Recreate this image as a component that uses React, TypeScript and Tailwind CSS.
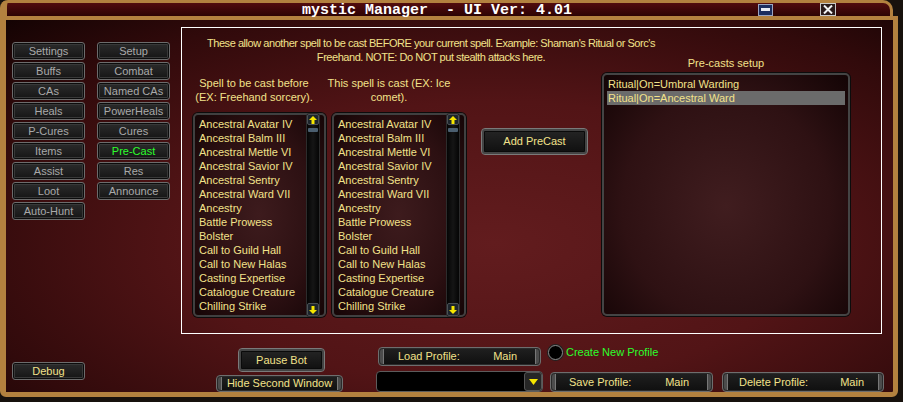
import React from "react";

const spells = [
  "Ancestral Avatar IV",
  "Ancestral Balm III",
  "Ancestral Mettle VI",
  "Ancestral Savior IV",
  "Ancestral Sentry",
  "Ancestral Ward VII",
  "Ancestry",
  "Battle Prowess",
  "Bolster",
  "Call to Guild Hall",
  "Call to New Halas",
  "Casting Expertise",
  "Catalogue Creature",
  "Chilling Strike",
];

const nav: [string, string | null][] = [
  ["Settings", "Setup"],
  ["Buffs", "Combat"],
  ["CAs", "Named CAs"],
  ["Heals", "PowerHeals"],
  ["P-Cures", "Cures"],
  ["Items", "Pre-Cast"],
  ["Assist", "Res"],
  ["Loot", "Announce"],
  ["Auto-Hunt", null],
];

function NavBtn({ label, className = "", color = "text-[#a9a9a9]" }: { label: string; className?: string; color?: string }) {
  return (
    <div
      className={`flex items-center justify-center rounded-[3px] border border-[#6c6c6c] bg-[linear-gradient(#2c2c2c,#151515)] shadow-[inset_0_0_0_1px_#0c0c0c,inset_0_0_0_2px_#383838] leading-none ${color} ${className}`}
    >
      {label}
    </div>
  );
}

function BigBtn({ label, className = "" }: { label: string; className?: string }) {
  return (
    <div
      className={`flex items-center justify-center rounded-[4px] border border-[#7a7a7a] bg-[linear-gradient(#262626,#0e0e0e)] shadow-[inset_0_0_0_2px_#444,inset_0_0_0_3px_#0a0a0a] text-[#f2e28a] leading-none ${className}`}
    >
      {label}
    </div>
  );
}

function BracketBtn({ className = "", children }: { className?: string; children: React.ReactNode }) {
  return (
    <div className={`flex rounded-[4px] border border-[#6e6e6e] bg-[#2a2a2a] p-[1px] ${className}`}>
      <div className="flex flex-1 rounded-[3px] border-x-[3px] border-[#4c4c4c] bg-[linear-gradient(#1f1f1f,#101010)] shadow-[inset_1px_0_0_#777,inset_-1px_0_0_#777] text-[#f2e28a] leading-none">
        {children}
      </div>
    </div>
  );
}

function UpArrow() {
  return (
    <svg width="8" height="8" viewBox="0 0 8 8">
      <polygon points="4,0 8,4 5.5,4 5.5,8 2.5,8 2.5,4 0,4" fill="#f6e600" />
    </svg>
  );
}
function DownArrow() {
  return (
    <svg width="8" height="8" viewBox="0 0 8 8">
      <polygon points="4,8 8,4 5.5,4 5.5,0 2.5,0 2.5,4 0,4" fill="#f6e600" />
    </svg>
  );
}

function Scrollbar() {
  return (
    <div className="-my-[2px] mr-[4px] flex w-[14px] flex-col rounded-[3px] border border-[#2c2c2c] bg-[linear-gradient(90deg,#050505,#151515,#050505)]">
      <div className="flex h-[11px] items-center justify-center rounded-[2px] border border-[#4a4f55] bg-[#1d252c]">
        <UpArrow />
      </div>
      <div className="mx-[1px] mt-[3px] h-[4px] rounded-[1px] bg-[#4b5f70]" />
      <div className="flex-1" />
      <div className="flex h-[13px] items-center justify-center rounded-[2px] border border-[#4a4f55] bg-[#1d252c]">
        <DownArrow />
      </div>
    </div>
  );
}

function SpellList({ w }: { w: string }) {
  return (
    <div
      className={`flex h-[204px] ${w} rounded-[5px] border-2 border-[#404040] bg-[radial-gradient(ellipse_at_50%_50%,#3d1b1d_0%,#2c1012_60%,#150506_100%)] shadow-[0_0_0_1px_#0c0c0c]`}
    >
      <div className="flex-1 overflow-hidden whitespace-nowrap pl-[4px] pt-[2px] leading-[14px] text-[#f2e28a]">
        {spells.map((s) => (
          <div key={s}>{s}</div>
        ))}
      </div>
      <Scrollbar />
    </div>
  );
}

export default function App() {
  return (
    <div className="h-[402px] w-[903px] overflow-hidden bg-[#17110d] font-['Liberation_Sans',Arial,sans-serif] text-[11px]">
      {/* Title bar */}
      <div className="flex h-[16px] w-[893px] items-center rounded-tl-[8px] rounded-tr-[10px] border-l-[7px] border-r-[3px] border-t-[3px] border-[#b3813f] bg-[linear-gradient(#520c0e,#2c0304)]">
        <div className="ml-[295px] mt-[1px] whitespace-pre font-['Liberation_Mono',monospace] text-[15px] font-bold leading-none text-white">
          {"mystic Manager  - UI Ver: 4.01"}
        </div>
        <div className="ml-[186px] flex h-[12px] w-[15px] items-start justify-center border border-[#9aa4c0] bg-[#1b2d5e] pt-[3px]">
          <div className="h-[3px] w-[9px] bg-[#e8ecf4]" />
        </div>
        <div className="ml-[47px] flex h-[13px] w-[16px] items-center justify-center self-start border border-[#c8c8c8] bg-[#2a1a1a]">
          <svg width="10" height="9" viewBox="0 0 10 9">
            <path d="M1 0.5 L9 8.5 M9 0.5 L1 8.5" stroke="#f2f2f2" strokeWidth="2" />
          </svg>
        </div>
      </div>

      {/* Body */}
      <div className="flex h-[381px] w-[898px] flex-col rounded-b-[6px] border-b-[5px] border-l-[6px] border-r-[5px] border-t-[4px] border-[#b3813f] bg-[radial-gradient(ellipse_at_55%_60%,#621c1e_0%,#521416_45%,#310a0b_78%,#140303_100%)] pt-[7px]">
        <div className="flex h-[307px]">
          {/* Left nav */}
          <div className="w-[175px] pl-[6px] pt-[15px]">
            <div className="grid grid-cols-[73px_73px] gap-x-[12px] gap-y-[2px]">
              {nav.map(([a, b]) => (
                <React.Fragment key={a}>
                  <NavBtn label={a} className="h-[18px]" />
                  {b ? (
                    <NavBtn label={b} className="h-[18px]" color={b === "Pre-Cast" ? "text-[#2cff2c]" : "text-[#a9a9a9]"} />
                  ) : (
                    <div />
                  )}
                </React.Fragment>
              ))}
            </div>
          </div>

          {/* Main panel */}
          <div className="flex h-[307px] w-[701px] flex-col border border-white">
            <div className="h-[29px] w-[498px] whitespace-nowrap pt-[8px] text-center leading-[14px] tracking-[-0.45px] text-[#f2e28a]">
              These allow another spell to be cast BEFORE your current spell. Example: Shaman's Ritual or Sorc's
              <br />
              Freehand. NOTE: Do NOT put stealth attacks here.
            </div>
            <div className="flex">
              <div className="w-[420px]">
                <div className="flex gap-[11px] pl-[10px] pt-[19px] text-center leading-[14px] text-[#f2e28a]">
                  <div className="w-[124px] whitespace-nowrap">
                    Spell to be cast before
                    <br />
                    (EX: Freehand sorcery).
                  </div>
                  <div className="w-[124px] whitespace-nowrap">
                    This spell is cast (EX: Ice
                    <br />
                    comet).
                  </div>
                </div>
                <div className="mt-[9px] flex items-start pl-[11px]">
                  <SpellList w="w-[133px]" />
                  <div className="ml-[6px]">
                    <SpellList w="w-[134px]" />
                  </div>
                  <BigBtn label="Add PreCast" className="ml-[15px] mt-[15px] h-[27px] w-[107px]" />
                </div>
              </div>
              <div className="flex w-[248px] flex-col">
                <div className="h-[16px] text-center leading-[12px] text-[#f2e28a]">Pre-casts setup</div>
                <div className="h-[243px] rounded-[5px] border-2 border-[#444] bg-[radial-gradient(ellipse_at_50%_55%,#401d1f_0%,#2e1113_60%,#130405_100%)] px-[3px] pt-[2px] leading-[14px] text-[#f2e28a] shadow-[0_0_0_1px_#0c0c0c]">
                  <div className="pl-[1px]">Ritual|On=Umbral Warding</div>
                  <div className="bg-[#6b6b6b] pl-[1px]">Ritual|On=Ancestral Ward</div>
                </div>
              </div>
            </div>
          </div>
        </div>

        {/* Bottom row */}
        <div className="flex h-[58px]">
          <NavBtn label="Debug" className="ml-[6px] mt-[28px] h-[18px] w-[73px]" color="text-[#f2e28a]" />
          <div className="ml-[131px] flex w-[127px] flex-col">
            <BigBtn label="Pause Bot" className="ml-[22px] mt-[14px] h-[27px] w-[87px]" />
            <BracketBtn className="mt-[3px] h-[18px] w-[127px]">
              <div className="flex flex-1 items-center justify-center">Hide Second Window</div>
            </BracketBtn>
          </div>
          <div className="ml-[33px] flex flex-col">
            <div className="mt-[13px] flex items-start">
              <BracketBtn className="ml-[2px] h-[19px] w-[163px]">
                <div className="flex flex-1 items-center justify-between pl-[15px] pr-[19px]">
                  <span>Load Profile:</span>
                  <span>Main</span>
                </div>
              </BracketBtn>
              <div className="-mt-[2px] ml-[7px] h-[15px] w-[15px] rounded-full border border-[#8a8a8a] bg-black shadow-[0_0_0_1px_#222]" />
              <div className="-mt-[2px] ml-[3px] leading-[15px] text-[#2cff2c]">Create New Profile</div>
            </div>
            <div className="mt-[5px] flex items-start">
              <div className="flex h-[21px] w-[167px] rounded-[4px] border border-[#5c5c5c] bg-black">
                <div className="flex-1" />
                <div className="flex w-[18px] items-center justify-center rounded-[3px] border border-[#555] bg-[#262626]">
                  <svg width="9" height="6" viewBox="0 0 9 6">
                    <polygon points="0,0 9,0 4.5,6" fill="#f6e600" />
                  </svg>
                </div>
              </div>
              <BracketBtn className="ml-[7px] mt-[1px] h-[20px] w-[163px]">
                <div className="flex flex-1 items-center justify-between pl-[14px] pr-[19px]">
                  <span>Save Profile:</span>
                  <span>Main</span>
                </div>
              </BracketBtn>
              <BracketBtn className="ml-[9px] mt-[1px] h-[20px] w-[162px]">
                <div className="flex flex-1 items-center justify-between pl-[12px] pr-[15px]">
                  <span>Delete Profile:</span>
                  <span>Main</span>
                </div>
              </BracketBtn>
            </div>
          </div>
        </div>
      </div>
    </div>
  );
}
